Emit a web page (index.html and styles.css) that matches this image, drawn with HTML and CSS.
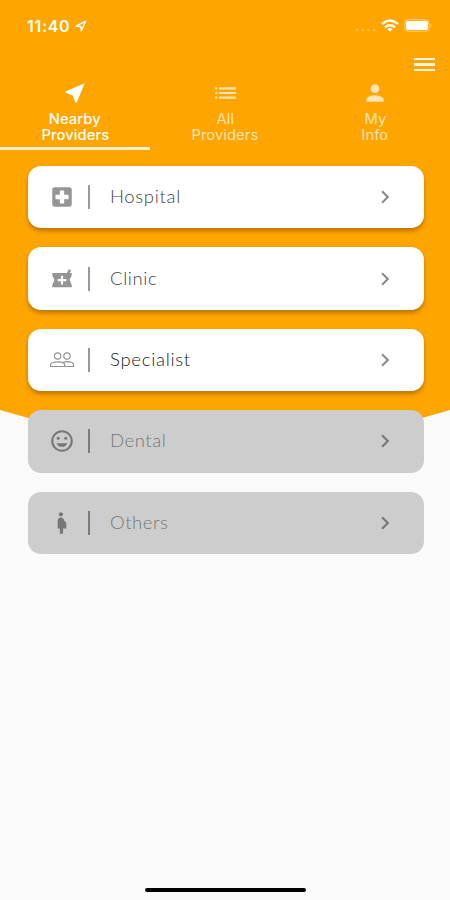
FILE: index.html
```html
<!DOCTYPE html>
<html lang="en">
<head>
<meta charset="utf-8">
<title>Providers</title>
<link rel="stylesheet" href="styles.css">
</head>
<body>
<div class="screen">
  <svg class="backdrop" viewBox="0 0 450 450" aria-hidden="true"><path d="M0 0H450V410Q337 444 225 444T0 410Z"/></svg>
  <header class="status">
    <span class="time">11:40</span>
    <svg class="locate" width="12" height="12" viewBox="0 0 12 12"><path d="M1.2 6.2 10.6 1.2 6.4 10.8 5.8 6.4Z" fill="none" stroke="#fff" stroke-width="1.500" stroke-linejoin="round"/></svg>
    <svg class="signal" width="22" height="4" viewBox="0 0 22 4"><g fill="#ffc04a"><circle cx="2" cy="2" r="1.300"/><circle cx="7.800" cy="2" r="1.300"/><circle cx="13.500" cy="2" r="1.300"/><circle cx="19.200" cy="2" r="1.300"/></g></svg>
    <svg class="wifi" width="18" height="13" viewBox="0 0 18 13"><g fill="none" stroke="#fff" stroke-width="2.400"><path d="M1 5Q9-1.800 17 5"/><path d="M4 8.200Q9 4.200 14 8.200"/></g><path d="M6.300 10.200Q9 8 11.700 10.200L9 12.700Z" fill="#fff"/></svg>
    <svg class="battery" width="29" height="13" viewBox="0 0 29 13"><rect x=".8" y=".8" width="24.400" height="11.400" rx="3" fill="none" stroke="#ffcf78"/><rect x="2" y="2" width="22" height="9" rx="2" fill="#fff"/><path d="M26.600 4.500q2 2 0 4z" fill="#ffd17c"/></svg>
  </header>
  <div class="toolbar"><div class="menu"><i></i><i></i><i></i></div></div>
  <nav class="tabs">
    <div class="tab active">
      <svg width="24" height="24" viewBox="0 0 24 24"><path d="M21 3 3 10.500v1l6.800 2.700L12.500 21h1z"/></svg>
      <span class="nearby">Nearby</span><span>Providers</span>
    </div>
    <div class="tab">
      <svg width="24" height="24" viewBox="0 0 24 24"><path d="M3 6.800h2v2H3zM3 11h2v2H3zM3 15.200h2v2H3zM6.500 6.800h15.500v2H6.500zM6.500 11h15.500v2H6.500zM6.500 15.200h15.500v2H6.500z"/></svg>
      <span>All</span><span>Providers</span>
    </div>
    <div class="tab">
      <svg width="26" height="26" viewBox="0 0 24 24"><path d="M12 12c2.200 0 4-1.800 4-4s-1.800-4-4-4-4 1.800-4 4 1.800 4 4 4zm0 2c-2.700 0-8 1.300-8 4v2h16v-2c0-2.700-5.300-4-8-4z"/></svg>
      <span>My</span><span>Info</span>
    </div>
  </nav>
  <main class="list">
    <div class="card">
      <svg class="icon" width="26" height="26" viewBox="0 0 24 24"><path d="M19 3H5c-1.100 0-2 .9-2 2v14c0 1.100.9 2 2 2h14c1.100 0 2-.9 2-2V5c0-1.100-.9-2-2-2zm-1 11h-4v4h-4v-4H6v-4h4V6h4v4h4z"/></svg>
      <span class="rule"></span><span class="label hospital">Hospital</span>
      <svg class="chevron" width="26" height="26" viewBox="0 0 24 24"><path d="M8.600 16.600 13.200 12 8.600 7.400 10 6l6 6-6 6z"/></svg>
    </div>
    <div class="card">
      <svg class="icon" width="26" height="26" viewBox="0 0 24 24"><path d="M21 6.500h-1.800l1.200-2.600-2.100-.8-1.700 3.400H3v2l2 4.500-2 4.500v2h18v-2l-2-4.500 2-4.500zM16 14h-3v3h-2v-3H8v-2h3V9h2v3h3z"/></svg>
      <span class="rule"></span><span class="label clinic">Clinic</span>
      <svg class="chevron" width="26" height="26" viewBox="0 0 24 24"><path d="M8.600 16.600 13.200 12 8.600 7.400 10 6l6 6-6 6z"/></svg>
    </div>
    <div class="card">
      <svg class="icon" width="26" height="26" viewBox="0 0 26 26"><g fill="none" stroke="#929292" stroke-width="1.200"><circle cx="8.600" cy="9" r="3.200"/><circle cx="18" cy="9" r="3.200"/><path d="M1.600 19.500v-1.700c0-4 14-4 14 0v1.700zM15.600 19.500h8.900v-1.700c0-3-6.500-3.900-10.700-2.200"/></g></svg>
      <span class="rule"></span><span class="label specialist">Specialist</span>
      <svg class="chevron" width="26" height="26" viewBox="0 0 24 24"><path d="M8.600 16.600 13.200 12 8.600 7.400 10 6l6 6-6 6z"/></svg>
    </div>
    <div class="card disabled">
      <svg class="icon" width="26" height="26" viewBox="0 0 24 24"><circle cx="12" cy="12" r="9" fill="none" stroke="#777" stroke-width="1.900"/><circle cx="8.500" cy="9.500" r="1.400"/><circle cx="15.500" cy="9.500" r="1.400"/><path d="M7 14h10c-.8 2-2.700 3.400-5 3.400S7.800 16 7 14z"/></svg>
      <span class="rule"></span><span class="label dental">Dental</span>
      <svg class="chevron" width="26" height="26" viewBox="0 0 24 24"><path d="M8.600 16.600 13.200 12 8.600 7.400 10 6l6 6-6 6z"/></svg>
    </div>
    <div class="card disabled">
      <svg class="icon" width="26" height="26" viewBox="0 0 24 24"><path d="M9 4c0-1.100.9-2 2-2s2 .9 2 2-.9 2-2 2-2-.9-2-2zm7 9c0-1.300-.8-2.500-2-3 0-1.700-1.300-3-3-3s-3 1.300-3 3v7h2v5h3v-5h3z"/></svg>
      <span class="rule"></span><span class="label others">Others</span>
      <svg class="chevron" width="26" height="26" viewBox="0 0 24 24"><path d="M8.600 16.600 13.200 12 8.600 7.400 10 6l6 6-6 6z"/></svg>
    </div>
  </main>
  <div class="home"></div>
</div>
</body>
</html>
```
FILE: styles.css
```css
* { box-sizing: border-box; }
body { margin: 0; }
svg { display: block; flex: none; }
.screen {
  position: relative;
  display: flex;
  flex-direction: column;
  width: 450px;
  height: 900px;
  overflow: hidden;
  background: #fafafa;
  font-family: Lato, sans-serif;
}
.backdrop { position: absolute; top: 0; left: 0; width: 450px; height: 450px; fill: #ffa500; }
.status, .toolbar, .tabs, .list, .home { position: relative; }
.status { display: flex; align-items: center; height: 51px; padding: 0 17px 0 27px; }
.time { width: 45px; font: 600 16px/20px Inter, sans-serif; letter-spacing: .7px; color: #fff; }
.locate { margin-left: 3px; }
.signal { margin: 8px 4px 0 auto; }
.battery { margin-left: 5px; }
.toolbar { display: flex; justify-content: flex-end; height: 29px; padding: 7px 15px 0; }
.menu { display: flex; flex-direction: column; gap: 3px; width: 21px; }
.menu i { height: 2.300px; background: #fff4dc; }
.tabs { display: grid; grid-template-columns: repeat(3, 1fr); height: 70px; }
.tab {
  display: flex;
  flex-direction: column;
  align-items: center;
  border-bottom: 3px solid transparent;
  font: 400 14px/16px Inter, sans-serif;
  letter-spacing: .1px;
  color: #ffe4b5;
  fill: #ffe4b5;
}
.tab span { transform: scaleX(1.05); }
.tab svg { width: 26px; height: 26px; margin-bottom: 5px; }
.tab.active { font-weight: 500; color: #fff; fill: #fff; border-color: #ffedcc; }
.list { display: flex; flex-direction: column; gap: 19px; padding: 16px 26.500px 0 27.500px; }
.card {
  display: flex;
  align-items: center;
  height: 62.400px;
  padding: 0 25.500px 0 21.500px;
  border-radius: 13px;
  background: #fff;
  box-shadow: 0 3px 4px rgba(90, 55, 0, .42);
  color: #444;
}
.icon { fill: #959595; }
.rule { width: 2px; height: 24px; margin: 0 20px 0 13px; background: #999; }
.label { font-size: 17px; line-height: 24px; font-weight: 300; transform: scaleX(1.09); transform-origin: left; }
.hospital { letter-spacing: .6px; }
.clinic { letter-spacing: .55px; }
.specialist { letter-spacing: .65px; color: #222; }
.dental { letter-spacing: .5px; }
.others { letter-spacing: .5px; }
.chevron { margin-left: auto; fill: #8c8c8c; }
.disabled { background: #cdcdcd; box-shadow: none; color: #777; }
.disabled .icon, .disabled .chevron { fill: #777; }
.disabled .rule { background: #7c7c7c; }
.home { width: 161px; height: 4.500px; margin: auto auto 8px; border-radius: 3px; background: #000; }
```
